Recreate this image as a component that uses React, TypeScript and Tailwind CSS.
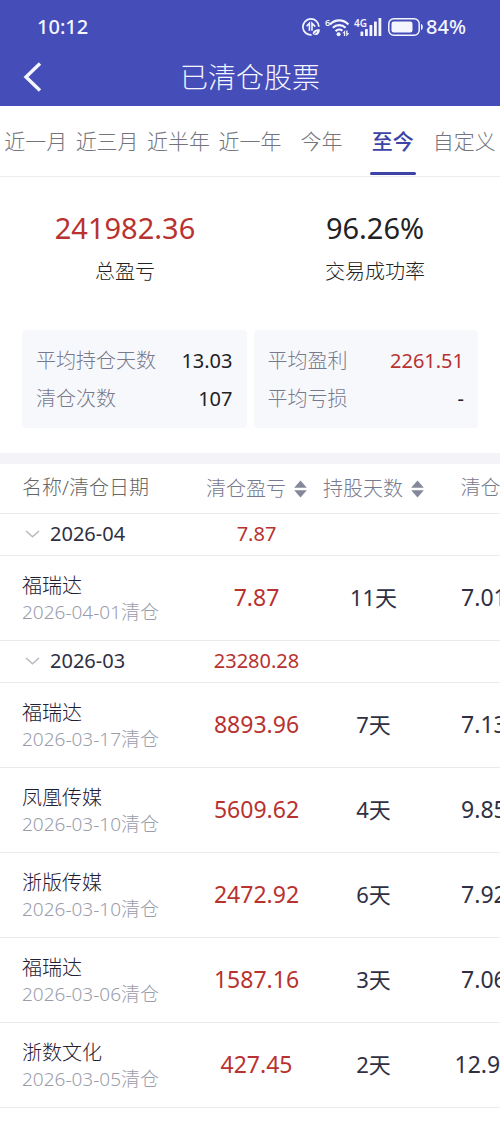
type Holding = {
  name: string;
  closedAt: string;
  profit: string;
  days: number;
  price: string;
};

type MonthGroup = {
  month: string;
  profit: string;
  holdings: Holding[];
};

const ranges = ["近一月", "近三月", "近半年", "近一年", "今年", "至今", "自定义"];
const activeRange = "至今";

const groups: MonthGroup[] = [
  {
    month: "2026-04",
    profit: "7.87",
    holdings: [
      { name: "福瑞达", closedAt: "2026-04-01", profit: "7.87", days: 11, price: "7.010" },
    ],
  },
  {
    month: "2026-03",
    profit: "23280.28",
    holdings: [
      { name: "福瑞达", closedAt: "2026-03-17", profit: "8893.96", days: 7, price: "7.130" },
      { name: "凤凰传媒", closedAt: "2026-03-10", profit: "5609.62", days: 4, price: "9.850" },
      { name: "浙版传媒", closedAt: "2026-03-10", profit: "2472.92", days: 6, price: "7.920" },
      { name: "福瑞达", closedAt: "2026-03-06", profit: "1587.16", days: 3, price: "7.060" },
      { name: "浙数文化", closedAt: "2026-03-05", profit: "427.45", days: 2, price: "12.910" },
    ],
  },
];

function PowerSaveIcon() {
  return (
    <svg className="size-[18px]" viewBox="0 0 18 18" fill="none" aria-hidden="true">
      <path d="M16.9 8.8A8 8 0 1 0 9.6 16.9" stroke="currentColor" strokeWidth="1.7" />
      <path d="M4.6 8.2L7.4 5.2V12.8M10 12.8V5.2L13.2 8.6" stroke="currentColor" strokeWidth="1.6" />
      <path d="M10.8 16.4C10.4 12.6 13 11.2 17.8 11.2C17.9 15.8 15.2 18 11.8 16.8Z" fill="currentColor" />
      <path d="M11.4 16.8L15 13.6" stroke="#444db8" strokeWidth="0.9" />
    </svg>
  );
}

function WifiIcon() {
  return (
    <svg className="h-5 w-[26px]" viewBox="0 0 26 20" fill="none" aria-hidden="true">
      <text x="1" y="9" fontSize="9" fontWeight="600" fill="currentColor">6</text>
      <g stroke="currentColor" strokeWidth="2.2">
        <path d="M6 7.4C11.2 2 19.2 2 24.4 7.4" />
        <path d="M8.8 10.8C12.4 7.2 18 7.2 21.6 10.8" />
        <path d="M11.6 14.2C13.6 12.2 16.6 12.2 18.4 13.8" />
      </g>
      <circle cx="14.6" cy="17.2" r="2" fill="currentColor" />
      <path d="M18.4 16.2L21.2 13.2V19H19.9V16.2ZM22.2 13.4H23.5V16.2H25.4L22.2 19.4Z" fill="currentColor" />
    </svg>
  );
}

function SignalIcon() {
  return (
    <svg className="h-5 w-7" viewBox="0 0 28 20" fill="currentColor" aria-hidden="true">
      <text x="0" y="10" fontSize="10" fontWeight="600">4G</text>
      <rect x="6.5" y="14.5" width="2.8" height="4.5" rx="0.6" />
      <rect x="11" y="12" width="2.8" height="7" rx="0.6" />
      <rect x="15.5" y="8" width="2.8" height="11" rx="0.6" />
      <rect x="20" y="4.5" width="2.8" height="14.5" rx="0.6" />
      <rect x="24.5" y="1" width="2.8" height="18" rx="0.6" />
    </svg>
  );
}

function BatteryIcon() {
  return (
    <svg className="h-[18px] w-9" viewBox="0 0 36 18" fill="none" aria-hidden="true">
      <rect x="0.8" y="0.8" width="30.4" height="16.4" rx="5" stroke="currentColor" strokeWidth="1.5" />
      <rect x="3.5" y="3.5" width="21" height="11" rx="2.2" fill="currentColor" />
      <path d="M33 6C35.4 6.4 35.4 11.6 33 12Z" fill="currentColor" />
    </svg>
  );
}

function BackIcon() {
  return (
    <svg className="h-[30px] w-5" viewBox="0 0 20 30" fill="none" aria-hidden="true">
      <path d="M18 1.5L4 15L18 28.5" stroke="currentColor" strokeWidth="3.4" />
    </svg>
  );
}

function SortIcon() {
  return (
    <svg className="h-[18px] w-[13px]" viewBox="0 0 13 18" fill="#85889a" aria-hidden="true">
      <path d="M6.5 0.5L12.8 7.8H0.2Z" />
      <path d="M6.5 17.5L12.8 10.2H0.2Z" />
    </svg>
  );
}

function ChevronIcon() {
  return (
    <svg className="h-2 w-[15px]" viewBox="0 0 15 8" fill="none" aria-hidden="true">
      <path d="M1 1L7.5 6.8L14 1" stroke="#b9bac2" strokeWidth="1.6" />
    </svg>
  );
}

function StatusBar() {
  return (
    <div className="flex h-[54px] items-center justify-between pl-[37px] pr-[34px]">
      <span className="text-[20px] font-medium">10:12</span>
      <div className="flex items-center">
        <PowerSaveIcon />
        <span className="ml-1 flex"><WifiIcon /></span>
        <span className="ml-1 flex"><SignalIcon /></span>
        <span className="ml-1.5 flex"><BatteryIcon /></span>
        <span className="ml-0.5 text-[20px] font-medium">84%</span>
      </div>
    </div>
  );
}

function Metric({ label, value, tone }: { label: string; value: string; tone: string }) {
  return (
    <div className="flex justify-between">
      <dt className="font-light text-[#777a8e]">{label}</dt>
      <dd className={tone}>{value}</dd>
    </div>
  );
}

function MonthRows({ group }: { group: MonthGroup }) {
  return (
    <tbody>
      <tr className="h-[42px] border-b border-[#ebebed]">
        <td className="pl-[25px]">
          <button type="button" className="flex items-center gap-2.5 text-[20px] leading-6 text-[#2f3044]">
            <ChevronIcon />
            {group.month}
          </button>
        </td>
        <td className="text-center text-[20px] leading-6 text-[#b83230]">{group.profit}</td>
        <td colSpan={2} />
      </tr>
      {group.holdings.map((item) => (
        <tr key={item.name + item.closedAt} className="h-[85px] border-b border-[#ebebed] text-center">
          <td className="pl-[22px] pt-0.5 text-left leading-[26px]">
            <p className="text-[20px] font-light text-[#1f2034]">{item.name}</p>
            <p className="text-[19px] font-light text-[#9a9dab]">{item.closedAt}清仓</p>
          </td>
          <td className="text-[23px] text-[#b83230]">{item.profit}</td>
          <td className="text-[22px] text-[#2f3044]">{item.days}天</td>
          <td className="text-[23px] text-[#2f3044]">{item.price}</td>
        </tr>
      ))}
    </tbody>
  );
}

export default function App() {
  return (
    <div className="min-h-screen bg-white font-['Noto_Sans','Noto_Sans_CJK_SC',sans-serif] text-[#222]">
      <header className="bg-[#444db8] text-[#f4f5ff]">
        <StatusBar />
        <div className="grid h-[52px] grid-cols-[64px_1fr_64px] items-center pb-1.5">
          <button type="button" aria-label="返回" className="flex justify-center">
            <BackIcon />
          </button>
          <h1 className="text-center text-[28px] font-light leading-9">已清仓股票</h1>
        </div>
      </header>

      <nav className="grid h-[71px] grid-cols-7 border-b border-[#ececee]">
        {ranges.map((range) => (
          <button
            key={range}
            type="button"
            className={`relative flex items-center justify-center whitespace-nowrap pt-0.5 text-[21px] ${
              range === activeRange ? "font-medium text-[#3d44a8]" : "font-light text-[#73747d]"
            }`}
          >
            {range}
            {range === activeRange && (
              <span className="absolute inset-x-[13px] bottom-px h-[3px] rounded-full bg-[#3d44a8]" />
            )}
          </button>
        ))}
      </nav>

      <section className="grid grid-cols-2 pt-[31px] text-center">
        <div>
          <p className="text-[29px] leading-10 text-[#b83230]">241982.36</p>
          <p className="mt-2 text-[20px] font-light leading-8">总盈亏</p>
        </div>
        <div>
          <p className="text-[29px] leading-10">96.26%</p>
          <p className="mt-2 text-[20px] font-light leading-8">交易成功率</p>
        </div>
      </section>

      <section className="mt-[42px] grid grid-cols-2 gap-[7px] px-[22px] text-[20px] leading-[38px]">
        <dl className="rounded-sm bg-[#f7f8fc] px-3.5 pb-2.5 pt-3">
          <Metric label="平均持仓天数" value="13.03" tone="text-[#222]" />
          <Metric label="清仓次数" value="107" tone="text-[#222]" />
        </dl>
        <dl className="rounded-sm bg-[#f7f8fc] px-3.5 pb-2.5 pt-3">
          <Metric label="平均盈利" value="2261.51" tone="text-[#b83230]" />
          <Metric label="平均亏损" value="-" tone="text-[#222]" />
        </dl>
      </section>

      <div className="mt-[25px] h-[11px] bg-[#f3f3f8]" />

      <div className="overflow-x-auto [scrollbar-width:none]">
        <table className="w-full min-w-[549px] table-fixed border-collapse">
          <colgroup>
            <col className="w-[198px]" />
            <col className="w-[117px]" />
            <col className="w-[117px]" />
            <col className="w-[117px]" />
          </colgroup>
          <thead>
            <tr className="h-[49px] whitespace-nowrap border-b border-[#ebebed] text-[20px] text-[#777a8e]">
              <th className="pl-[22px] text-left font-light text-[#666]">名称/清仓日期</th>
              <th className="font-light">
                <button type="button" className="inline-flex items-center gap-2 align-middle">
                  清仓盈亏
                  <SortIcon />
                </button>
              </th>
              <th className="font-light">
                <button type="button" className="inline-flex items-center gap-2 align-middle">
                  持股天数
                  <SortIcon />
                </button>
              </th>
              <th className="font-light">清仓价</th>
            </tr>
          </thead>
          {groups.map((group) => (
            <MonthRows key={group.month} group={group} />
          ))}
        </table>
      </div>
    </div>
  );
}
